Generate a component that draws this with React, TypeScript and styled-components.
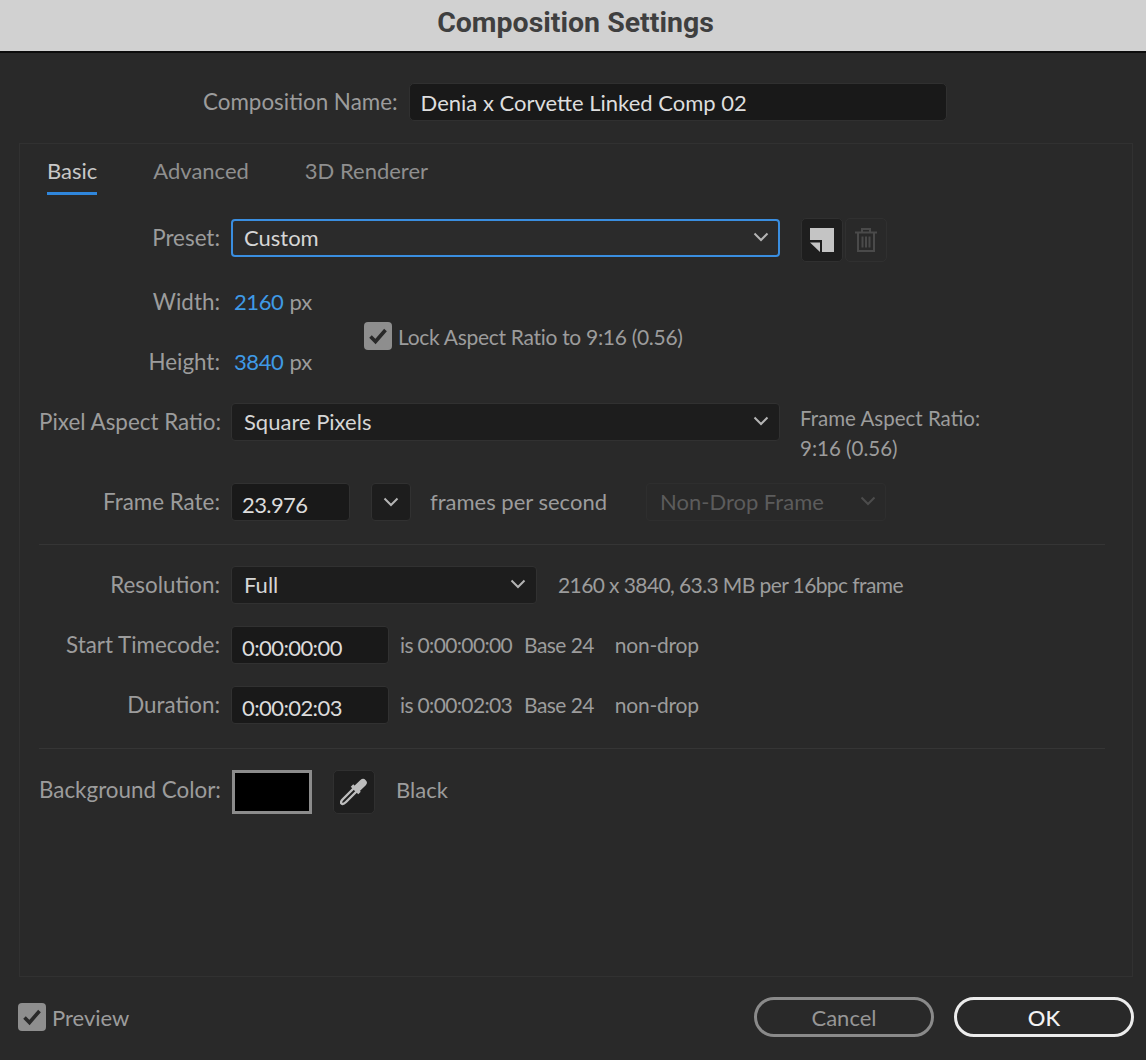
import React from "react";
import styled, { createGlobalStyle } from "styled-components";

const Global = createGlobalStyle`
  html, body { margin: 0; padding: 0; background: #292929; }
  * { box-sizing: border-box; }
  #root { width: 1146px; height: 1060px; overflow: hidden; }
`;

const FONT = `"Lato", "Noto Sans", sans-serif`;

const Dialog = styled.div`
  width: 1146px;
  height: 1060px;
  display: flex;
  flex-direction: column;
  background: #292929;
  font-family: ${FONT};
  font-size: 22px;
  color: #9c9c9c;
`;
const TitleBar = styled.div`
  height: 53px;
  flex: none;
  background: #d1d1d1;
  border-bottom: 2px solid #0c0c0c;
  display: flex;
  align-items: center;
  justify-content: center;
  font-family: Roboto, sans-serif;
  font-weight: 700;
  font-size: 28.5px;
  color: #3f3f3f;
  padding: 0 0 7px 5px;
`;
const NameRow = styled.div`
  height: 38px;
  margin-top: 30px;
  padding-left: 203px;
  display: flex;
  align-items: center;
  gap: 11px;
  flex: none;
`;
const Label = styled.label`
  white-space: nowrap;
  color: #9c9c9c;
  font-size: 22.4px;
  margin-bottom: 1px;
`;
const NameInput = styled.div`
  width: 538px;
  height: 38px;
  background: #191919;
  border: 1px solid #303030;
  border-radius: 5px;
  display: flex;
  align-items: center;
  padding: 1px 0 0 11px;
  color: #dedede;
`;
const Panel = styled.div`
  margin: 22px 13px 0 19px;
  height: 834px;
  flex: none;
  border: 1px solid #313131;
  display: flex;
  flex-direction: column;
  padding-left: 19px;
  padding-right: 27px;
`;
const Tabs = styled.div`
  display: flex;
  gap: 56px;
  margin-left: 8px;
  height: 50px;
  margin-top: 12px;
  flex: none;
`;
const Tab = styled.div<{ $active?: boolean }>`
  height: 39px;
  line-height: 29px;
  color: ${(p) => (p.$active ? "#c8c8c8" : "#8f8f8f")};
  border-bottom: ${(p) => (p.$active ? "3px solid #2f86dc" : "none")};
`;
const Row = styled.div<{ $top?: number }>`
  display: flex;
  align-items: center;
  height: 38px;
  flex: none;
  margin-top: ${(p) => p.$top ?? 0}px;
`;
const RowLabel = styled(Label)`
  width: 181px;
  flex: none;
  text-align: right;
  margin-right: 11px;
`;
const Select = styled.div<{ $w: number; $focus?: boolean }>`
  width: ${(p) => p.$w}px;
  height: 38px;
  flex: none;
  display: flex;
  align-items: center;
  justify-content: space-between;
  padding: 0 ${(p) => (p.$focus ? 9 : 10)}px 2px ${(p) => (p.$focus ? 11 : 12)}px;
  border-radius: 4px;
  color: #d6d6d6;
  background: ${(p) => (p.$focus ? "#2b2b2b" : "#1d1d1d")};
  border: ${(p) => (p.$focus ? "2px solid #3a8ee0" : "1px solid #313131")};
`;
const Chev = styled.svg`
  width: 16px;
  height: 10px;
  fill: none;
  stroke: #b4b4b4;
  stroke-width: 2;
  flex: none;
`;
const Chevron = () => (
  <Chev viewBox="0 0 16 10">
    <path d="M1.500 1.500 8 8l6.500-6.500" />
  </Chev>
);
const IconBox = styled.div<{ $dim?: boolean }>`
  width: 42px;
  height: 44px;
  flex: none;
  border: 1px solid #303030;
  border-radius: 5px;
  background: ${(p) => (p.$dim ? "transparent" : "#1e1e1e")};
  display: flex;
  align-items: center;
  justify-content: center;
`;
const PresetTools = styled.div`
  display: flex;
  gap: 2px;
  margin-left: 21px;
  margin-top: 3px;
`;
const SizeBlock = styled.div`
  display: flex;
  align-items: center;
  margin-top: 26px;
  flex: none;
`;
const SizeRows = styled.div`
  display: flex;
  flex-direction: column;
  gap: 22px;
  width: 325px;
  flex: none;
`;
const Value = styled.span`
  color: #3f9ae6;
  letter-spacing: -0.4px;
  margin: 0 0 1px 3px;
`;
const Unit = styled.span`
  margin: 0 0 1px 6px;
  color: #9c9c9c;
`;
const CheckWrap = styled.div`
  display: flex;
  align-items: center;
  gap: 6px;
  color: #9c9c9c;
`;
const LockWrap = styled(CheckWrap)`
  margin-top: 8px;
  font-size: 21px;
  letter-spacing: -0.3px;
`;
const CheckBox = styled.div`
  width: 28px;
  height: 28px;
  flex: none;
  border-radius: 4px;
  background: #8e8e8e;
  display: flex;
  align-items: center;
  justify-content: center;
`;
const Check = () => (
  <svg width="20" height="18" viewBox="0 0 20 18" fill="none" stroke="#292929" strokeWidth="3.6">
    <path d="M2.500 9.500 7.500 14.500 17.500 3" />
  </svg>
);
const AspectNote = styled.div`
  margin-left: 20px;
  line-height: 30px;
  font-size: 20.5px;
  padding-top: 22px;
  color: #9c9c9c;
`;
const TextInput = styled.div<{ $w: number }>`
  width: ${(p) => p.$w}px;
  height: 38px;
  flex: none;
  background: #191919;
  border: 1px solid #313131;
  border-radius: 4px;
  display: flex;
  align-items: center;
  padding: 4px 0 0 10px;
  letter-spacing: -0.6px;
  color: #dcdcdc;
`;
const Stepper = styled.div`
  width: 40px;
  height: 38px;
  margin-left: 21px;
  flex: none;
  background: #1d1d1d;
  border: 1px solid #313131;
  border-radius: 4px;
  display: flex;
  align-items: center;
  justify-content: center;
`;
const Inline = styled.span<{ $left: number }>`
  margin-left: ${(p) => p.$left}px;
  margin-bottom: 1px;
  white-space: nowrap;
  color: #9c9c9c;
`;
const Detail = styled(Inline)<{ $ls: number }>`
  font-size: 21px;
  letter-spacing: ${(p) => p.$ls}px;
`;
const DisabledSelect = styled.div`
  width: 240px;
  height: 38px;
  margin-left: 39px;
  padding: 0 9px 2px 13px;
  flex: none;
  display: flex;
  align-items: center;
  justify-content: space-between;
  border: 1px solid #2e2e2e;
  border-radius: 4px;
  color: #5c5c5c;
  svg { stroke: #4c4c4c; }
`;
const Divider = styled.div<{ $top: number }>`
  height: 1px;
  background: #353535;
  flex: none;
  margin-top: ${(p) => p.$top}px;
  margin-bottom: 21px;
`;
const Swatch = styled.div`
  width: 80px;
  height: 44px;
  flex: none;
  margin-left: 1px;
  background: #000;
  border: 3px solid #8c8c8c;
`;
const DropperBox = styled(IconBox)`
  margin-left: 21px;
`;
const SwatchRow = styled(Row)`
  height: 44px;
  ${RowLabel} { margin-bottom: 5px; }
`;
const BlackText = styled(Inline)`
  margin-bottom: 5px;
`;
const Footer = styled.div`
  flex: 1;
  display: flex;
  align-items: center;
  padding: 0 12px 3px 18px;
`;
const Spacer = styled.div`
  flex: 1;
`;
const Button = styled.div<{ $primary?: boolean }>`
  width: 180px;
  height: 40px;
  margin-left: 20px;
  border-radius: 20px;
  display: flex;
  align-items: center;
  justify-content: center;
  border: 3px solid ${(p) => (p.$primary ? "#ececec" : "#8a8a8a")};
  color: ${(p) => (p.$primary ? "#f2f2f2" : "#969696")};
  font-weight: ${(p) => (p.$primary ? 500 : 400)};
`;

const TimeDetails = ({ value }: { value: string }) => (
  <>
    <Detail $left={11} $ls={-0.65}>is {value}</Detail>
    <Detail $left={12} $ls={-0.57}>Base 24</Detail>
    <Detail $left={21} $ls={-0.25}>non-drop</Detail>
  </>
);

export default function App() {
  return (
    <Dialog>
      <Global />
      <TitleBar>Composition Settings</TitleBar>
      <NameRow>
        <Label>Composition Name:</Label>
        <NameInput>Denia x Corvette Linked Comp 02</NameInput>
      </NameRow>
      <Panel>
        <Tabs>
          <Tab $active>Basic</Tab>
          <Tab>Advanced</Tab>
          <Tab>3D Renderer</Tab>
        </Tabs>
        <Row $top={13}>
          <RowLabel>Preset:</RowLabel>
          <Select $w={549} $focus>
            Custom
            <Chevron />
          </Select>
          <PresetTools>
            <IconBox>
              <svg width="24" height="24" viewBox="0 0 24 24">
                <path d="M0 0h24v24H12V12H0z" fill="#c4c4c4" />
                <path d="M0 14.500h10V24z" fill="#c4c4c4" />
              </svg>
            </IconBox>
            <IconBox $dim>
              <svg width="22" height="24" viewBox="0 0 22 24" fill="none" stroke="#4a4a4a" strokeWidth="2">
                <path d="M0 4.500h22M7 4.500V1h8v3.500M3 4.500V23h16V4.500M7.500 8.500v11M11 8.500v11M14.500 8.500v11" />
              </svg>
            </IconBox>
          </PresetTools>
        </Row>
        <SizeBlock>
          <SizeRows>
            <Row>
              <RowLabel>Width:</RowLabel>
              <Value>2160</Value>
              <Unit>px</Unit>
            </Row>
            <Row>
              <RowLabel>Height:</RowLabel>
              <Value>3840</Value>
              <Unit>px</Unit>
            </Row>
          </SizeRows>
          <LockWrap>
            <CheckBox>
              <Check />
            </CheckBox>
            Lock Aspect Ratio to 9:16 (0.56)
          </LockWrap>
        </SizeBlock>
        <Row $top={22}>
          <RowLabel>Pixel Aspect Ratio:</RowLabel>
          <Select $w={549}>
            Square Pixels
            <Chevron />
          </Select>
          <AspectNote>
            Frame Aspect Ratio:
            <br />
            9:16 (0.56)
          </AspectNote>
        </Row>
        <Row $top={42}>
          <RowLabel>Frame Rate:</RowLabel>
          <TextInput $w={119}>23.976</TextInput>
          <Stepper>
            <Chevron />
          </Stepper>
          <Inline $left={19}>frames per second</Inline>
          <DisabledSelect>
            Non-Drop Frame
            <Chevron />
          </DisabledSelect>
        </Row>
        <Divider $top={23} />
        <Row>
          <RowLabel>Resolution:</RowLabel>
          <Select $w={306}>
            Full
            <Chevron />
          </Select>
          <Detail $left={21} $ls={-0.6}>2160 x 3840, 63.3 MB per 16bpc frame</Detail>
        </Row>
        <Row $top={22}>
          <RowLabel>Start Timecode:</RowLabel>
          <TextInput $w={158}>0:00:00:00</TextInput>
          <TimeDetails value="0:00:00:00" />
        </Row>
        <Row $top={22}>
          <RowLabel>Duration:</RowLabel>
          <TextInput $w={158}>0:00:02:03</TextInput>
          <TimeDetails value="0:00:02:03" />
        </Row>
        <Divider $top={24} />
        <SwatchRow>
          <RowLabel>Background Color:</RowLabel>
          <Swatch />
          <DropperBox>
            <svg width="28" height="28" viewBox="0 0 28 28" fill="none">
              <path d="M14.500 9.500 3 21c-2 2-2.500 3.500-1.500 4.500s2.500.5 4.500-1.500L17.500 12.500" stroke="#bdbdbd" strokeWidth="2.400" />
              <path d="M12 7.500 19.500 15" stroke="#bdbdbd" strokeWidth="3.600" />
              <path d="M17.500 10 23 4.800" stroke="#bdbdbd" strokeWidth="7.500" strokeLinecap="round" />
            </svg>
          </DropperBox>
          <BlackText $left={21}>Black</BlackText>
        </SwatchRow>
      </Panel>
      <Footer>
        <CheckWrap>
          <CheckBox>
            <Check />
          </CheckBox>
          Preview
        </CheckWrap>
        <Spacer />
        <Button>Cancel</Button>
        <Button $primary>OK</Button>
      </Footer>
    </Dialog>
  );
}
